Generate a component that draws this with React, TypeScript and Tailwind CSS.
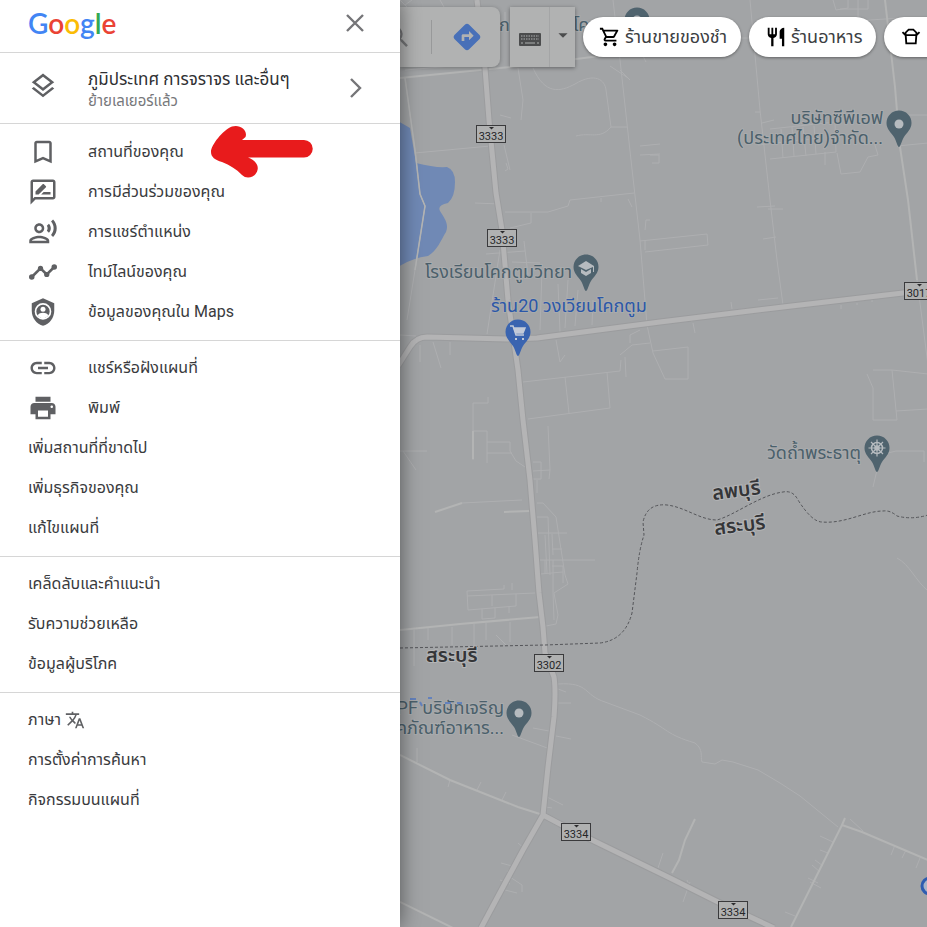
import React from 'react';
import type { IconType } from 'react-icons';
import {
  MdArrowDropDown,
  MdBookmarkBorder,
  MdDirections,
  MdLink,
  MdOutlineLayers,
  MdOutlineRateReview,
  MdOutlineRecordVoiceOver,
  MdOutlineShoppingCart,
  MdOutlineTakeoutDining,
  MdPrint,
  MdRestaurant,
  MdSearch,
  MdTranslate,
} from 'react-icons/md';

type MenuItem = {
  label: string;
  icon?: IconType | (() => React.ReactElement);
  trailing?: IconType;
};

const ShieldIcon = () => (
  <svg viewBox="0 0 24 24" width="30" height="30" fill="currentColor">
    <path d="M12 1 3 5v6c0 5.55 3.84 10.74 9 12 5.16-1.26 9-6.45 9-12V5z" />
    <circle cx="12" cy="11.5" r="6" fill="none" stroke="#fff" strokeWidth="1.3" />
    <circle cx="12" cy="9.8" r="2" fill="#fff" />
    <path d="M7.8 14.6c.9-1.4 2.5-2 4.2-2s3.3.6 4.2 2c-1 1.5-2.5 2.4-4.2 2.4s-3.2-.9-4.2-2.4z" fill="#fff" />
  </svg>
);

const TimelineIcon = () => (
  <svg viewBox="0 0 24 24" width="30" height="30" fill="currentColor">
    <path d="M3 16l7-7 5 5 6-6" fill="none" stroke="currentColor" strokeWidth="2" />
    <circle cx="3" cy="16" r="2.2" />
    <circle cx="10" cy="9" r="2.1" />
    <circle cx="15" cy="14" r="2.1" />
    <circle cx="21" cy="8" r="2.2" />
  </svg>
);

const groups: MenuItem[][] = [
  [
    { label: 'สถานที่ของคุณ', icon: MdBookmarkBorder },
    { label: 'การมีส่วนร่วมของคุณ', icon: MdOutlineRateReview },
    { label: 'การแชร์ตำแหน่ง', icon: MdOutlineRecordVoiceOver },
    { label: 'ไทม์ไลน์ของคุณ', icon: TimelineIcon },
    { label: 'ข้อมูลของคุณใน Maps', icon: ShieldIcon },
  ],
  [
    { label: 'แชร์หรือฝังแผนที่', icon: MdLink },
    { label: 'พิมพ์', icon: MdPrint },
    { label: 'เพิ่มสถานที่ที่ขาดไป' },
    { label: 'เพิ่มธุรกิจของคุณ' },
    { label: 'แก้ไขแผนที่' },
  ],
  [{ label: 'เคล็ดลับและคำแนะนำ' }, { label: 'รับความช่วยเหลือ' }, { label: 'ข้อมูลผู้บริโภค' }],
  [
    { label: 'ภาษา', trailing: MdTranslate },
    { label: 'การตั้งค่าการค้นหา' },
    { label: 'กิจกรรมบนแผนที่' },
  ],
];

const Logo = () => (
  <a href="#" className="font-[Lato,sans-serif] text-[28px] leading-8 font-semibold">
    <span className="text-[#4285f4]">G</span>
    <span className="text-[#ea4335]">o</span>
    <span className="text-[#fbbc05]">o</span>
    <span className="text-[#4285f4]">g</span>
    <span className="text-[#34a853]">l</span>
    <span className="text-[#ea4335]">e</span>
  </a>
);

const RedArrow = () => (
  <svg className="pointer-events-none absolute top-px left-[210px]" width="104" height="54" viewBox="0 0 104 54">
    <path
      d="M1 27C1 20 13 5 22 1.500C30-1 38 5 35.500 12L32 15H94A8.700 8.700 0 0 1 94 32.500H38C44 35 49 39 47.500 45C46 52 37 55 32 50C26 44 20 40 12 37C5 35 1 32 1 27Z"
      fill="#e81b1c"
    />
  </svg>
);

const Sidebar = () => (
  <aside className="z-20 min-h-screen w-[400px] shrink-0 bg-white shadow-[0_0_20px_rgba(0,0,0,0.5)]">
    <header className="flex h-[53px] items-center justify-between border-b border-[#d6d6d6] pr-9 pb-1.5 pl-7">
      <Logo />
      <button aria-label="ปิด">
        <svg width="18" height="18" viewBox="0 0 18 18" fill="none" stroke="#757578" strokeWidth="2.4">
          <path d="M1 1l16 16M17 1L1 17" />
        </svg>
      </button>
    </header>
    <button className="flex h-[71px] w-full items-center border-b border-[#d6d6d6] pr-9 pl-7 text-left">
      <MdOutlineLayers size={30} className="mr-[30px] mb-1 text-[#5f6063]" />
      <span className="flex-1 pt-1.5">
        <span className="block text-[17px] leading-5 text-[#2f3033]">ภูมิประเทศ การจราจร และอื่นๆ</span>
        <span className="block text-[15px] leading-6 text-[#77787b]">ย้ายเลเยอร์แล้ว</span>
      </span>
      <svg width="18" height="20" viewBox="0 0 18 20" fill="none" stroke="#757578" strokeWidth="2.4">
        <path d="M5 1l9 9-9 9" />
      </svg>
    </button>
    <nav>
      {groups.map((items, i) => (
        <ul key={i} className="relative border-b border-[#d6d6d6] pt-[7px] pb-2 first:pt-2 last:border-b-0">
          {items.map(({ label, icon: Icon, trailing: Trailing }) => (
            <li key={label}>
              <a href="#" className="flex h-10 items-center px-7 text-base text-[#3a3b3e]">
                {Icon && (
                  <span className="mr-[30px] text-[#5f6063]">
                    <Icon size={30} />
                  </span>
                )}
                {label}
                {Trailing && <Trailing size={20} className="ml-1 text-[#5f6063]" />}
              </a>
            </li>
          ))}
          {i === 0 && <RedArrow />}
        </ul>
      ))}
    </nav>
  </aside>
);

const mainRoads = [
  'M477 0L485 68L489 120L496 193L502 230L508 300L518 370L523 420L530 480L535 540L539 593L543 627L545 653L554 677Q556 690 554 717L548 767L543 815L523 850L503 887L481 928',
  'M543 815L560 824L590 839L670 878L718 902L774 928',
  'M398 366L410 347Q416 337 427 337L507 339L537 338L660 322L783 307L903 293L928 291',
];

const midRoads = [
  'M885 0L895 87L900 147L908 200L917 280',
  'M400 78L520 66L600 56',
  'M400 630L460 624L540 617',
  'M400 755L450 780L518 807L543 815',
  'M400 902L453 928',
  'M791 927L842 825L862 832L928 860',
  'M672 873L679 860L685 840L695 819',
  'M435 512L462 503M504 512L530 511',
  'M473 431L473 459M842 825L845 818',
];

const smallRoads = [
  'M750 0L760 110L770 200L777 260L783 305',
  'M613 0L620 60L631 160L640 240L647 325L653 353L665 379L688 379L688 347L653 351',
  'M405 78L415 150L420 194L425 206L415 270L407 320',
  'M533 68C545 95 560 92 575 84C595 72 605 80 606 90L611 127L627 127M611 127C600 140 590 132 576 136',
  'M518 68L523 100L521 120M415 153L490 146',
  'M505 212L548 212L568 206L570 200L634 193',
  'M475 203L500 204M510 228L531 223L531 213',
  'M640 241L707 234L708 245L645 252',
  'M523 382L620 371L621 360M565 377L569 413M607 372L610 408L528 419',
  'M400 335L416 336M420 345V362M433 342L441 368M450 342V355M556 340L560 362L565 355M487 334L500 250M540 330L542 270M565 328L568 280M560 332L558 284M575 326L578 290M592 325L593 300',
  'M486 254L525 251M512 262L540 263M524 241L528 275',
  'M462 503L522 500',
  'M473 460V403L488 403V397M473 431L487 431V463M487 442H510V451L516 461L525 467M487 453H512',
  'M400 451L427 451M403 451L416 470',
  'M533 462H541L541 479H531M533 471L550 470L548 426M537 480V493M550 470L549 479',
  'M537 503H543L556 517L565 575L568 584L554 593L558 615L556 624L546 626M537 517H548L550 575M538 533H567M545 535L547 573M552 534L553 555M552 549H562M540 560L595 560M552 566H563V583M553 560V592L554 620M540 574L563 572M545 573V560',
  'M467 591L504 589V585M467 596L535 593M467 591L468 610L516 606V594M492 595V606M482 609V619L495 618V608M509 606V613M512 590V583',
  'M428 628V640M452 627V645M474 624V645M486 623V640M510 622V642M496 635L506 645M414 630V666',
  'M558 684C590 682 583 695 605 702L640 715C670 730 665 734 695 743C704 750 700 756 702 762L715 764L722 760L733 762L758 770L780 783L800 796L838 827',
  'M533 728L549 731M512 735L550 749M556 736L571 739M558 689L566 692M557 703H571M547 797L563 805M546 807L552 808',
  'M417 762V748M450 780L448 787M477 790L481 782M502 800L506 792M518 843L525 849M501 863L512 866L507 872M500 880L510 884M510 877L522 885L522 892M505 890L517 893',
  'M658 868L663 853M690 882L683 902M687 880L692 892M820 836L833 842M820 850L828 853M815 860L823 866M812 865L820 872M808 878L818 883M810 882L821 888M785 912L795 916M850 819L863 831M895 845L891 855M906 850L902 858M920 858L916 868',
  'M897 558C910 565 915 580 928 591M770 129L835 122L836 152L770 159M781 129L783 158M792 127L794 156M803 127L806 156M814 126L816 154M837 153L841 174L860 172L868 157L878 155L874 142M825 152V165',
  'M762 123L774 120M758 145L820 138M895 115H928M897 146L928 143M650 155H659V163H652M650 220H646L645 230M755 112L760 112M757 207L775 206M763 239L776 237M783 209L768 209',
  'M867 374L873 388V420L897 420L892 370L928 374M873 370L892 370M896 411L928 409M888 453L896 451H924V462M873 487L877 470M917 280L928 365',
  'M833 0L836 10L848 8L848 0M858 0V17M868 0V9L840 9M840 22L900 18M740 38H750M638 35L700 32',
  'M505 171L508 169L506 163M504 145L510 170M640 146L660 144M640 155L660 154M601 198V202M628 199L632 207M645 250L645 240M500 115L511 118',
  'M405 70L500 62M412 0L405 5M400 0L410 10M440 0L444 7M505 12V24M610 66L628 78M620 70L630 80M643 56L646 62M636 10L640 17',
  'M620 355L632 345L650 343M625 357L626 377M630 343V335L640 330M690 315L692 322M732 309L731 302M693 323L695 333M841 305V309M857 303V305M872 300V302M758 300L778 298',
];

const places = [
  { x: 637, y: 20 },
  { x: 899, y: 123 },
  { x: 586, y: 267 },
  { x: 877, y: 448 },
  { x: 519, y: 713 },
];

const shields = [
  { x: 491, y: 134, no: '3333' },
  { x: 502, y: 238, no: '3333' },
  { x: 549, y: 663, no: '3302' },
  { x: 576, y: 832, no: '3334' },
  { x: 733, y: 910, no: '3334' },
  { x: 919, y: 291, no: '3017' },
];

const PIN = 'M0-12.500C-7-12.500-12.500-7-12.500 0C-12.500 6-8 9.500-5 14C-2.500 18-1.500 24 0 24C1.500 24 2.500 18 5 14C8 9.500 12.500 6 12.500 0C12.500-7 7-12.500 0-12.500Z';

const MapCanvas = () => (
  <svg
    className="absolute inset-0 h-full w-full"
    viewBox="400 0 527 927"
    preserveAspectRatio="xMinYMin slice"
    role="img"
    aria-label="แผนที่"
  >
    <rect x="400" width="3000" height="3000" fill="#a2a4a6" />
    <path
      d="M398 121L410 128L416 163Q435 168 447 167Q455 170 455 182Q455 197 448 203Q437 205 440 211C445 219 449 224 446 232C441 240 437 251 428 256Q412 258 398 267Z"
      fill="#7089b5"
    />
    <g fill="none" stroke="#aeafb1" strokeWidth="1">
      {smallRoads.map((d) => (
        <path key={d} d={d} />
      ))}
    </g>
    <g fill="none" stroke="#b3b4b4" strokeWidth="2">
      {midRoads.map((d) => (
        <path key={d} d={d} />
      ))}
    </g>
    <path d="M405 78L415 150L420 194L425 206L415 270" fill="none" stroke="#b3b4b4" strokeWidth="1.500" />
    <g fill="none" strokeLinejoin="round">
      {mainRoads.map((d) => (
        <path key={d} d={d} stroke="#9b9c9e" strokeWidth="7" />
      ))}
      {mainRoads.map((d) => (
        <path key={d} d={d} stroke="#b4b4b5" strokeWidth="5" />
      ))}
    </g>
    <path
      d="M400 648L545 645L600 643Q625 640 632 613L637 573Q639 550 644 535L643 522Q647 503 667 505C685 507 700 520 717 520C735 515 760 495 783 492Q793 490 798 500Q812 522 822 522C845 524 865 511 883 511Q890 510 897 516Q912 520 928 515"
      fill="none"
      stroke="#55565a"
      strokeWidth="1"
      strokeDasharray="3 2"
    />

    {shields.map(({ x, y, no }) => (
      <g key={`${x}-${y}`}>
        <rect x={x - 14.5} y={y - 8.5} width="29" height="17" fill="#b0b1b1" stroke="#3a3a3c" />
        <path d={`M${x - 2} ${y - 7}h5l-2.500 2.500z`} fill="#2c2c2e" />
        <text x={x} y={y + 6} textAnchor="middle" fill="#252628" className="font-[Roboto,sans-serif] text-[11px]">
          {no}
        </text>
      </g>
    ))}

    {places.map(({ x, y }) => (
      <path key={x} d={PIN} transform={`translate(${x} ${y})`} fill="#4f636e" />
    ))}
    <g fill="#b6bbbf">
      <circle cx="637" cy="20" r="4.500" />
      <circle cx="899" cy="124" r="4.500" />
      <circle cx="519" cy="713" r="4.500" />
      <path d="M586 261L578 266L586 270L593 267V272H594V266ZM581 269V273L586 276L591 273V269L586 272Z" />
    </g>
    <g fill="none" stroke="#b6bbbf" strokeWidth="1.500" transform="translate(877 448)">
      <circle r="5.500" />
      <circle r="2" />
      <path strokeWidth="1.200" d="M0-8.500V8.500M-8.500 0H8.500M-6-6L6 6M6-6L-6 6" />
    </g>
    <path d={PIN} transform="translate(518 332)" fill="#3a64b0" />
    <g fill="none" stroke="#c3cad8" strokeWidth="1.500">
      <path d="M510 326H513L516 335H524" />
      <path d="M514 328H525L523 333H516Z" fill="#c3cad8" />
      <path d="M515 339h2M522 339h2" strokeWidth="2" />
    </g>

    <g fill="#4b606b" stroke="#a9abad" strokeWidth="2" paintOrder="stroke" className="text-[18px]">
      <text x="499" y="31">ก</text>
      <text x="573" y="31">โค</text>
      <text x="883" y="124" textAnchor="end">บริษัทซีพีเอฟ</text>
      <text x="883" y="144" textAnchor="end">(ประเทศไทย)จำกัด...</text>
      <text x="572" y="278" textAnchor="end">โรงเรียนโคกตูมวิทยา</text>
      <text x="861" y="459" textAnchor="end">วัดถ้ำพระธาตุ</text>
      <text x="504" y="714" textAnchor="end">PF บริษัทเจริญ</text>
      <text x="504" y="734" textAnchor="end">คภัณฑ์อาหาร...</text>
      <text x="491" y="312" fill="#2b57a8">ร้าน20 วงเวียนโคกตูม</text>
    </g>
    <path d="M410 699h6M420 702l2 4M428 698h4M445 703h6M457 703h5" stroke="#6482bd" strokeWidth="2" />
    <g fill="#343538" stroke="#b4b5b7" strokeWidth="2" paintOrder="stroke" className="text-[20px] font-semibold">
      <text x="426" y="662">สระบุรี</text>
      <text x="713" y="500" transform="rotate(-7 713 500)">ลพบุรี</text>
      <text x="715" y="535" transform="rotate(-7 715 535)">สระบุรี</text>
    </g>
    <circle cx="930" cy="886" r="8" fill="#a9b4c8" stroke="#2f5cb0" strokeWidth="3" />
  </svg>
);

const chips = [
  { name: 'ร้านขายของชำ', label: 'ร้านขายของชำ', icon: MdOutlineShoppingCart },
  { name: 'ร้านอาหาร', label: 'ร้านอาหาร', icon: MdRestaurant },
  { name: 'ซื้อกลับบ้าน', icon: MdOutlineTakeoutDining },
];

const Toolbar = () => (
  <div className="absolute inset-x-0 top-0 flex items-start overflow-hidden pt-[7px] pb-4">
    <div className="flex h-[60px] w-[100px] shrink-0 items-center overflow-hidden rounded-r-lg bg-[#b1b2b2] shadow-[0_1px_4px_rgba(0,0,0,0.3)]">
      <button aria-label="ค้นหา" className="-ml-4 text-[#747577]">
        <MdSearch size={28} />
      </button>
      <span className="ml-[19px] h-[34px] w-px bg-[#98999a]" />
      <button aria-label="เส้นทาง" className="ml-[19px] text-[#4870b8]">
        <MdDirections size={32} />
      </button>
    </div>
    <div className="ml-[10px] flex h-[60px] w-[65px] shrink-0 bg-[#b1b2b2] shadow-[0_1px_4px_rgba(0,0,0,0.4)]">
      <button aria-label="แป้นพิมพ์" className="flex w-10 items-center justify-center border-r border-[#a4a5a6] pt-1">
        <svg width="22" height="13" viewBox="0 0 22 13">
          <rect width="22" height="13" rx="1" fill="#4b4c4d" />
          <path d="M2 3h18M2 6h18" stroke="#8d8e8f" strokeWidth="1.500" strokeDasharray="1.500 1" />
          <path d="M2 10h2M6 10h10M18 10h2" stroke="#8d8e8f" strokeWidth="1.500" />
        </svg>
      </button>
      <button aria-label="เลือกแป้นพิมพ์" className="flex flex-1 items-center justify-center pb-1 text-[#4b4c4d]">
        <MdArrowDropDown size={22} />
      </button>
    </div>
    <div className="mt-[10px] ml-2 flex gap-2">
      {chips.map(({ name, label, icon: Icon }) => (
        <button
          key={name}
          aria-label={name}
          className="flex h-10 min-w-[120px] shrink-0 items-center gap-1 rounded-full bg-white pr-3.5 pl-4 text-lg whitespace-nowrap text-[#3c4043] shadow-[0_1px_3px_rgba(0,0,0,0.4)]"
        >
          <Icon size={22} className="text-black" />
          {label}
        </button>
      ))}
    </div>
  </div>
);

const App = () => {
  return (
    <div className="flex min-h-screen overflow-hidden font-[Roboto,'Noto_Sans_Thai',sans-serif]">
      <Sidebar />
      <main className="relative min-w-0 flex-1 overflow-hidden bg-[#a2a4a6]">
        <MapCanvas />
        <Toolbar />
      </main>
    </div>
  );
};

export default App;
